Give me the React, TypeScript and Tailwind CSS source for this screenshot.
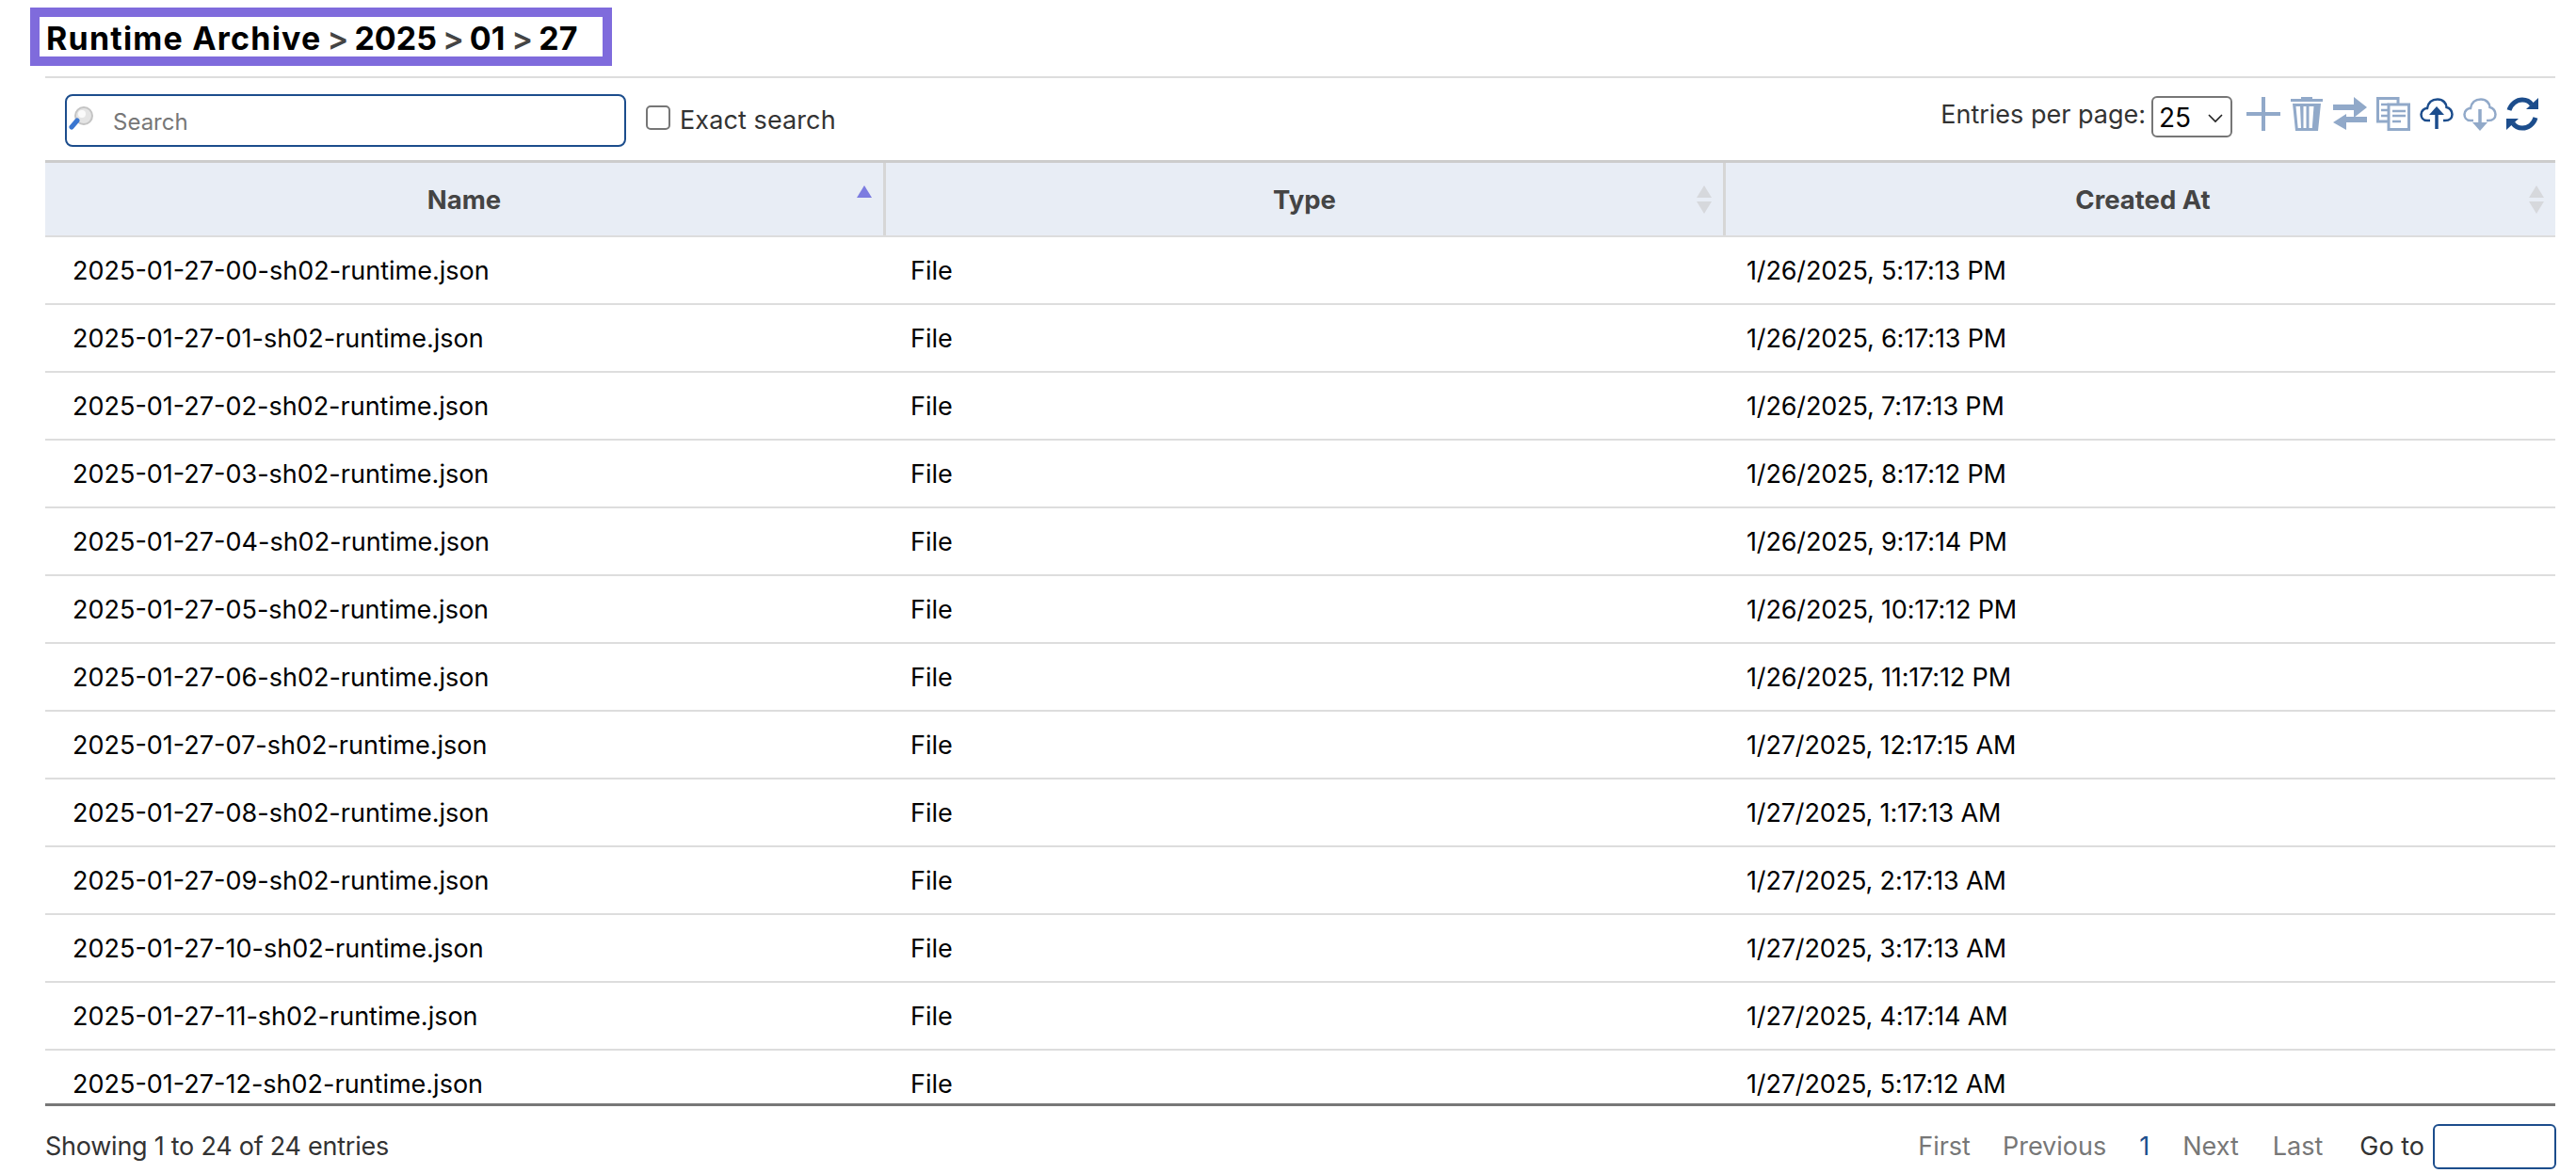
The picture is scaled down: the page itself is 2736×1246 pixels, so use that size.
import React from "react";

const rows = [
  ["2025-01-27-00-sh02-runtime.json", "1/26/2025, 5:17:13 PM"],
  ["2025-01-27-01-sh02-runtime.json", "1/26/2025, 6:17:13 PM"],
  ["2025-01-27-02-sh02-runtime.json", "1/26/2025, 7:17:13 PM"],
  ["2025-01-27-03-sh02-runtime.json", "1/26/2025, 8:17:12 PM"],
  ["2025-01-27-04-sh02-runtime.json", "1/26/2025, 9:17:14 PM"],
  ["2025-01-27-05-sh02-runtime.json", "1/26/2025, 10:17:12 PM"],
  ["2025-01-27-06-sh02-runtime.json", "1/26/2025, 11:17:12 PM"],
  ["2025-01-27-07-sh02-runtime.json", "1/27/2025, 12:17:15 AM"],
  ["2025-01-27-08-sh02-runtime.json", "1/27/2025, 1:17:13 AM"],
  ["2025-01-27-09-sh02-runtime.json", "1/27/2025, 2:17:13 AM"],
  ["2025-01-27-10-sh02-runtime.json", "1/27/2025, 3:17:13 AM"],
  ["2025-01-27-11-sh02-runtime.json", "1/27/2025, 4:17:14 AM"],
  ["2025-01-27-12-sh02-runtime.json", "1/27/2025, 5:17:12 AM"],
];

const L = "#91a9c9";
const D = "#1c4d8c";

function SortIcon({ active }: { active?: boolean }) {
  return (
    <svg width="18" height="32" viewBox="0 0 18 32" className="absolute right-[11px] top-[23px]">
      <path d="M9 1 L17 14 H1 Z" fill={active ? "#7c7ce0" : "#d6d8dc"} />
      {!active && <path d="M9 31 L17 18 H1 Z" fill="#d6d8dc" />}
    </svg>
  );
}

function HeaderCell({ label, active, cls }: { label: string; active?: boolean; cls: string }) {
  return (
    <div className={`relative flex items-center justify-center pt-[3px] font-bold text-[#444444] ${cls}`}>
      {label}
      <SortIcon active={active} />
    </div>
  );
}

export default function App() {
  return (
    <div
      className="w-[2736px] h-[1246px] overflow-hidden bg-white text-black pt-[8px] text-[27px]"
      style={{ fontFamily: "Inter, 'Noto Sans', sans-serif" }}
    >
      <div className="ml-[32px] w-[618px] h-[62px] border-[10px] border-[#7f6bdc] flex items-center pl-[7px] pt-[4px] text-[34px] font-bold leading-none">
        <span className="tracking-[1.2px]">Runtime Archive</span>
        <span className="text-[#444444] font-semibold mx-[6px]">&gt;</span>
        <span>2025</span>
        <span className="text-[#444444] font-semibold mx-[6px]">&gt;</span>
        <span>01</span>
        <span className="text-[#444444] font-semibold ml-[7px] mr-[6px]">&gt;</span>
        <span>27</span>
      </div>

      <div className="ml-[48px] w-[2666px] mt-[11px] border-t-2 border-[#dddddd]">
        <div className="h-[87px] flex items-center">
          <div className="relative ml-[21px] w-[596px] h-[56px] mt-[3px]">
            <svg width="28" height="26" viewBox="0 0 28 26" className="absolute left-[4px] top-[13px]">
              <circle cx="16" cy="10" r="9" fill="#e4e4e4" stroke="#c4c4c4" strokeWidth="2" />
              <circle cx="14" cy="8" r="4" fill="#fafafa" />
              <path d="M9 15 L3 22" stroke="#3a76d0" strokeWidth="5" strokeLinecap="round" />
            </svg>
            <input
              placeholder="Search"
              className="w-full h-full border-2 border-[#1c4d8c] rounded-[8px] pl-[49px] pt-[2px] text-[24px] placeholder:text-[#777777] outline-none bg-transparent"
            />
          </div>
          <input type="checkbox" className="appearance-none ml-[21px] w-[26px] h-[26px] border-2 border-[#767676] rounded-[5px] mt-[-3px]" />
          <span className="ml-[10px] text-[#333333] text-[27px] mt-[3px] tracking-[0.1px]">Exact search</span>

          <div className="ml-auto flex items-center text-[#333333] mr-[18px]">
            <span className="text-[27px] mr-[6px] mt-[-8px]">Entries per page:</span>
            <div className="relative w-[86px] h-[44px] mt-[-6px]">
              <select defaultValue="25" className="appearance-none w-full h-full border-2 border-[#767676] rounded-[6px] bg-white pl-[6px] text-[28px] text-black outline-none">
                <option>25</option>
              </select>
              <svg width="16" height="10" viewBox="0 0 16 10" className="absolute right-[10px] top-[19px]">
                <path d="M1 1 L8 8 L15 1" fill="none" stroke="#222" strokeWidth="1.6" />
              </svg>
            </div>
            <div className="flex items-start ml-[15px] gap-[10px] mt-[-12px]">
              <svg width="36" height="36" viewBox="0 0 36 36">
                <path d="M16 0h4v16h16v4H20v16h-4V20H0v-4h16z" fill={L} />
              </svg>
              <svg width="36" height="36" viewBox="0 0 36 36">
                <path d="M12 0h12v2h11v3H1V2h11zM3 7h30l-3 29H6zM6.500 10l2.200 23h3.300L11 10zm8 0v23h3V10zm6 0v23h3.300l1.700-23z" fill={L} fillRule="evenodd" />
              </svg>
              <svg width="36" height="36" viewBox="0 0 36 36">
                <path d="M0 8h22V0l14 11-14 11v-8H0zM36 21v6H14v8L0 27l14-9v3z" fill={L} />
              </svg>
              <svg width="36" height="36" viewBox="0 0 36 36" fill="none" stroke={L} strokeWidth="3">
                <path d="M13 26H1.500V1.500H23V8" />
                <path d="M13 8h21.500v26.500H13z" fill="#fff" />
                <path d="M5 8h8M5 14h8M5 20h8M17 15h14M17 20h14M17 26h9" strokeWidth="2.500" />
              </svg>
              <svg width="36" height="36" viewBox="0 0 36 36" fill="none" stroke={D}>
                <path d="M11 25H8C3 25 1.500 21 1.500 18.500 1.500 14.500 5 12 8 12 9 6 13 2.500 19 2.500 25 2.500 28.500 7 28.500 11 32 11.500 34.500 15 34.500 18.500 34.500 22 32 25 27 25h-2" strokeWidth="2.500" />
                <path d="M18 34V16" strokeWidth="3.500" />
                <path d="M18 10l8 9H10z" fill={D} stroke="none" />
              </svg>
              <svg width="36" height="36" viewBox="0 0 36 36" fill="none" stroke={L}>
                <path d="M11 25H8C3 25 1.500 21 1.500 18.500 1.500 14.500 5 12 8 12 9 6 13 2.500 19 2.500 25 2.500 28.500 7 28.500 11 32 11.500 34.500 15 34.500 18.500 34.500 22 32 25 27 25h-2" strokeWidth="2.500" />
                <path d="M18 13v16" strokeWidth="3.500" />
                <path d="M18 36l-8-9h16z" fill={L} stroke="none" />
              </svg>
              <svg width="34" height="36" viewBox="0 0 34 36" fill="none" stroke={D} strokeWidth="5">
                <path d="M3 14C5 7 11 3 17 3c4 0 8 2 10 5" />
                <path d="M21 13h13V1z" fill={D} stroke="none" />
                <path d="M31 22c-2 7-8 11-14 11-4 0-8-2-10-5" />
                <path d="M13 23H0v12z" fill={D} stroke="none" />
              </svg>
            </div>
          </div>
        </div>

        <div className="grid grid-cols-[893px_892px_881px] h-[82px] bg-[#e8edf5] border-t-[3px] border-b-[2px] border-t-[#cccccc] border-b-[#dddddd] text-[27.500px]">
          <HeaderCell label="Name" active cls="border-r-[3px] border-[#d6d6d6]" />
          <HeaderCell label="Type" cls="border-r-[3px] border-[#d6d6d6]" />
          <HeaderCell label="Created At" cls="pl-[5px]" />
        </div>

        <div className="h-[923px] overflow-hidden border-b-[3px] border-[#777777]">
          {rows.map(([name, created]) => (
            <div key={name} className="grid grid-cols-[893px_892px_881px] h-[72px] border-b-2 border-[#dddddd] items-center pt-[2px]">
              <div className="pl-[29px]">{name}</div>
              <div className="pl-[26px]">File</div>
              <div className="pl-[22px] tracking-[-0.15px]">{created}</div>
            </div>
          ))}
        </div>

        <div className="flex items-center h-[68px] pt-[18px] text-[27px] text-[#333333]">
          <span className="tracking-[-0.25px]">Showing 1 to 24 of 24 entries</span>
          <div className="ml-auto flex items-center text-[#777777] -mr-[1px]">
            <span>First</span>
            <span className="ml-[34px]">Previous</span>
            <span className="ml-[35px] text-[#1c4d8c]">1</span>
            <span className="ml-[35px]">Next</span>
            <span className="ml-[36px]">Last</span>
            <span className="ml-[39px] text-[#333333]">Go to</span>
            <input className="ml-[9px] w-[131px] h-[48px] border-2 border-[#1c4d8c] rounded-[6px] outline-none" />
          </div>
        </div>
      </div>
    </div>
  );
}
